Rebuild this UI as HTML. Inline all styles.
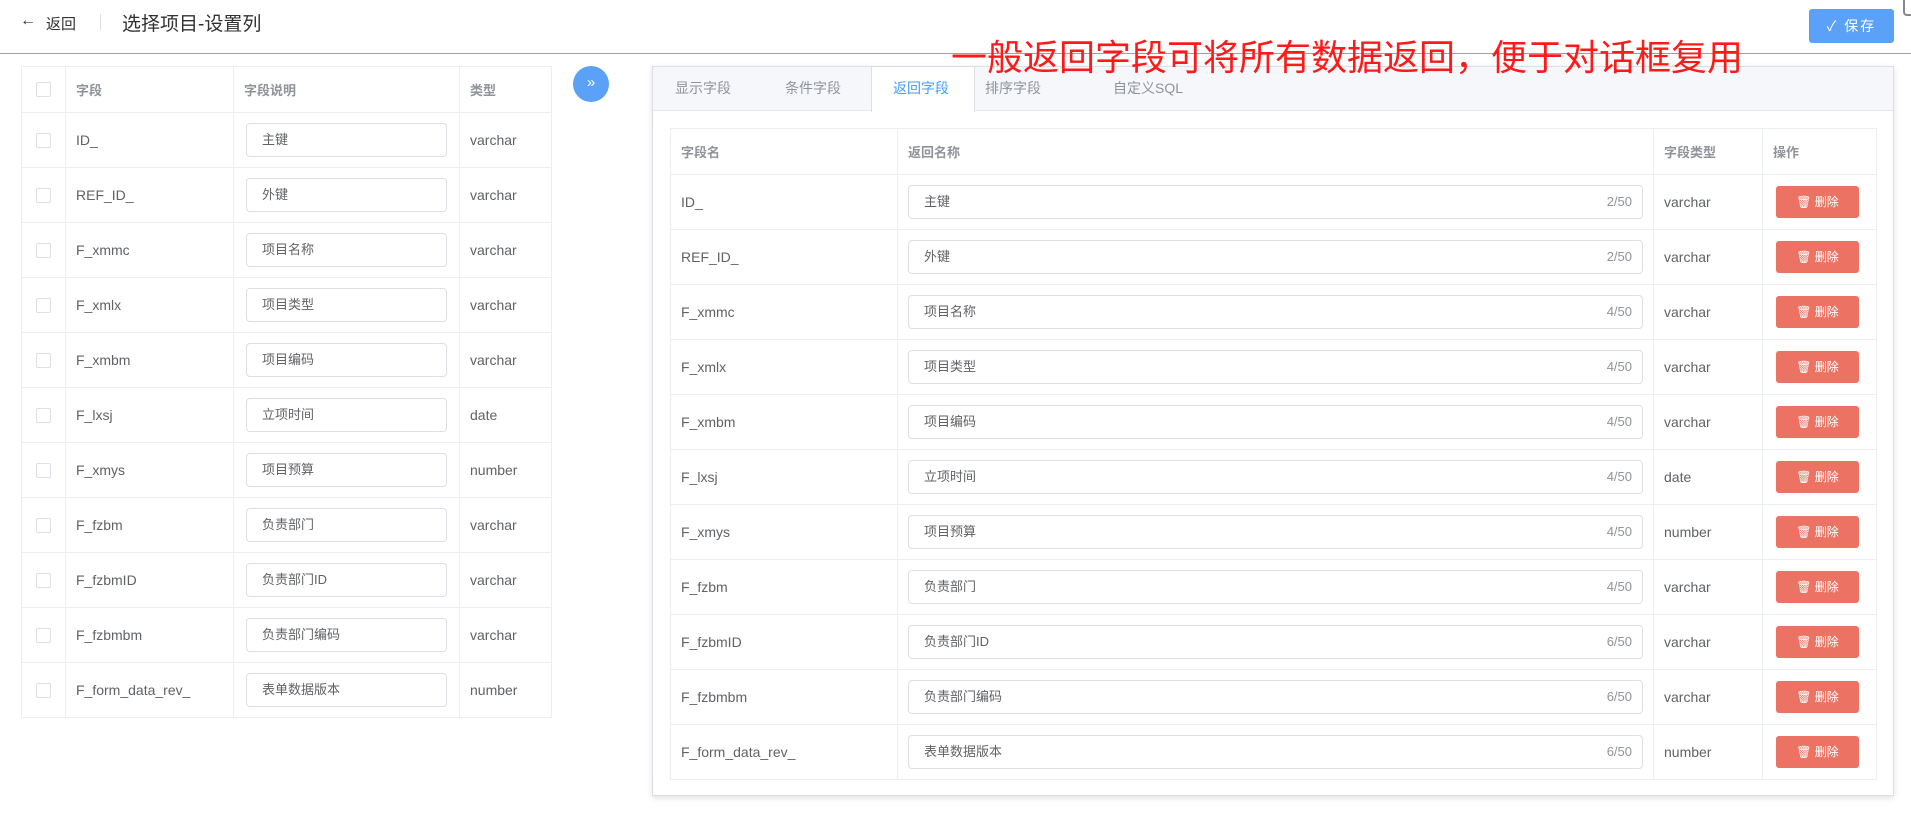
<!DOCTYPE html>
<html><head><meta charset="utf-8"><style>
*{box-sizing:border-box;margin:0;padding:0}
body{width:1911px;height:816px;background:#fff;position:relative;overflow:hidden;font-family:"Liberation Sans","Noto Sans CJK SC",sans-serif;font-size:14px;color:#606266}
.a{position:absolute}
.hdr{font-size:19px;color:#303133}
table{border-collapse:collapse;position:absolute;table-layout:fixed}
td{border:1px solid #ebeef5;padding:0 10px;height:55px;white-space:nowrap}
tr.h td{height:46px;color:#909399;font-weight:bold;font-size:13px}
.cb{width:15px;height:15px;border:1px solid #dcdfe6;border-radius:2px;display:block;margin:0 auto}
.inp{height:34px;border:1px solid #dcdfe6;border-radius:4px;line-height:32px;padding:0 15px;color:#606266;position:relative;font-size:13px}
.cnt{position:absolute;right:10px;top:0;color:#909399;font-size:13px}
.del{width:83px;height:32px;background:#ec7263;border-radius:3px;color:#fff;font-size:12px;line-height:32px;text-align:center;margin-left:3px}
.tab{position:absolute;top:66px;height:45px;line-height:45px;font-size:14px;color:#909399}
</style></head><body>
<div class="a" style="left:20px;top:12px;font-size:16px;color:#303133">&#8592;</div>
<div class="a" style="left:46px;top:13px;font-size:15px;color:#303133">返回</div>
<div class="a" style="left:100px;top:14px;width:1px;height:16px;background:#dcdfe6"></div>
<div class="a hdr" style="left:122px;top:9px">选择项目-设置列</div>
<div class="a" style="left:0;top:53px;width:1911px;height:1px;background:#a0a0a0"></div>
<div class="a" style="left:1809px;top:9px;width:85px;height:34px;background:#5aa1f7;border-radius:3px;color:#fff;font-size:14px;line-height:34px;text-align:center;letter-spacing:2px">✓ 保存</div>
<div class="a" style="left:1903px;top:0;width:10px;height:16px;border:2px solid #888;border-right:none;border-top:none;border-radius:0 0 0 4px"></div>

<table style="left:21px;top:66px;width:530px">
<colgroup><col style="width:44px"><col style="width:168px"><col style="width:226px"><col style="width:92px"></colgroup>
<tr class="h"><td><span class="cb"></span></td><td>字段</td><td>字段说明</td><td>类型</td></tr>
<tr><td><span class="cb"></span></td><td>ID_</td><td style="padding:0 12px"><div class="inp">主键</div></td><td>varchar</td></tr>
<tr><td><span class="cb"></span></td><td>REF_ID_</td><td style="padding:0 12px"><div class="inp">外键</div></td><td>varchar</td></tr>
<tr><td><span class="cb"></span></td><td>F_xmmc</td><td style="padding:0 12px"><div class="inp">项目名称</div></td><td>varchar</td></tr>
<tr><td><span class="cb"></span></td><td>F_xmlx</td><td style="padding:0 12px"><div class="inp">项目类型</div></td><td>varchar</td></tr>
<tr><td><span class="cb"></span></td><td>F_xmbm</td><td style="padding:0 12px"><div class="inp">项目编码</div></td><td>varchar</td></tr>
<tr><td><span class="cb"></span></td><td>F_lxsj</td><td style="padding:0 12px"><div class="inp">立项时间</div></td><td>date</td></tr>
<tr><td><span class="cb"></span></td><td>F_xmys</td><td style="padding:0 12px"><div class="inp">项目预算</div></td><td>number</td></tr>
<tr><td><span class="cb"></span></td><td>F_fzbm</td><td style="padding:0 12px"><div class="inp">负责部门</div></td><td>varchar</td></tr>
<tr><td><span class="cb"></span></td><td>F_fzbmID</td><td style="padding:0 12px"><div class="inp">负责部门ID</div></td><td>varchar</td></tr>
<tr><td><span class="cb"></span></td><td>F_fzbmbm</td><td style="padding:0 12px"><div class="inp">负责部门编码</div></td><td>varchar</td></tr>
<tr><td><span class="cb"></span></td><td>F_form_data_rev_</td><td style="padding:0 12px"><div class="inp">表单数据版本</div></td><td>number</td></tr>
</table>

<div class="a" style="left:573px;top:66px;width:36px;height:36px;border-radius:50%;background:#5aa1f7;color:#fff;text-align:center;line-height:34px;font-size:15px">»</div>

<div class="a" style="left:652px;top:66px;width:1242px;height:730px;border:1px solid #dcdfe6;box-shadow:0 2px 6px rgba(0,0,0,.12);background:#fff"></div>
<div class="a" style="left:653px;top:67px;width:1240px;height:44px;background:#f5f7fa;border-bottom:1px solid #e4e7ed"></div>
<div class="a" style="left:871px;top:67px;width:104px;height:45px;background:#fff;border-left:1px solid #dcdfe6;border-right:1px solid #dcdfe6"></div>
<div class="tab" style="left:675px">显示字段</div>
<div class="tab" style="left:785px">条件字段</div>
<div class="tab" style="left:893px;color:#409eff">返回字段</div>
<div class="tab" style="left:985px">排序字段</div>
<div class="tab" style="left:1113px">自定义SQL</div>

<table style="left:670px;top:128px;width:1206px">
<colgroup><col style="width:227px"><col style="width:756px"><col style="width:109px"><col style="width:114px"></colgroup>
<tr class="h"><td>字段名</td><td>返回名称</td><td>字段类型</td><td>操作</td></tr>
<tr><td>ID_</td><td><div class="inp">主键<span class="cnt">2/50</span></div></td><td>varchar</td><td><div class="del">🗑 删除</div></td></tr>
<tr><td>REF_ID_</td><td><div class="inp">外键<span class="cnt">2/50</span></div></td><td>varchar</td><td><div class="del">🗑 删除</div></td></tr>
<tr><td>F_xmmc</td><td><div class="inp">项目名称<span class="cnt">4/50</span></div></td><td>varchar</td><td><div class="del">🗑 删除</div></td></tr>
<tr><td>F_xmlx</td><td><div class="inp">项目类型<span class="cnt">4/50</span></div></td><td>varchar</td><td><div class="del">🗑 删除</div></td></tr>
<tr><td>F_xmbm</td><td><div class="inp">项目编码<span class="cnt">4/50</span></div></td><td>varchar</td><td><div class="del">🗑 删除</div></td></tr>
<tr><td>F_lxsj</td><td><div class="inp">立项时间<span class="cnt">4/50</span></div></td><td>date</td><td><div class="del">🗑 删除</div></td></tr>
<tr><td>F_xmys</td><td><div class="inp">项目预算<span class="cnt">4/50</span></div></td><td>number</td><td><div class="del">🗑 删除</div></td></tr>
<tr><td>F_fzbm</td><td><div class="inp">负责部门<span class="cnt">4/50</span></div></td><td>varchar</td><td><div class="del">🗑 删除</div></td></tr>
<tr><td>F_fzbmID</td><td><div class="inp">负责部门ID<span class="cnt">6/50</span></div></td><td>varchar</td><td><div class="del">🗑 删除</div></td></tr>
<tr><td>F_fzbmbm</td><td><div class="inp">负责部门编码<span class="cnt">6/50</span></div></td><td>varchar</td><td><div class="del">🗑 删除</div></td></tr>
<tr><td>F_form_data_rev_</td><td><div class="inp">表单数据版本<span class="cnt">6/50</span></div></td><td>number</td><td><div class="del">🗑 删除</div></td></tr>
</table>

<div class="a" style="left:951px;top:37px;font-size:36px;line-height:42px;color:#ff1a1a;white-space:nowrap">一般返回字段可将所有数据返回，便于对话框复用</div>
</body></html>
